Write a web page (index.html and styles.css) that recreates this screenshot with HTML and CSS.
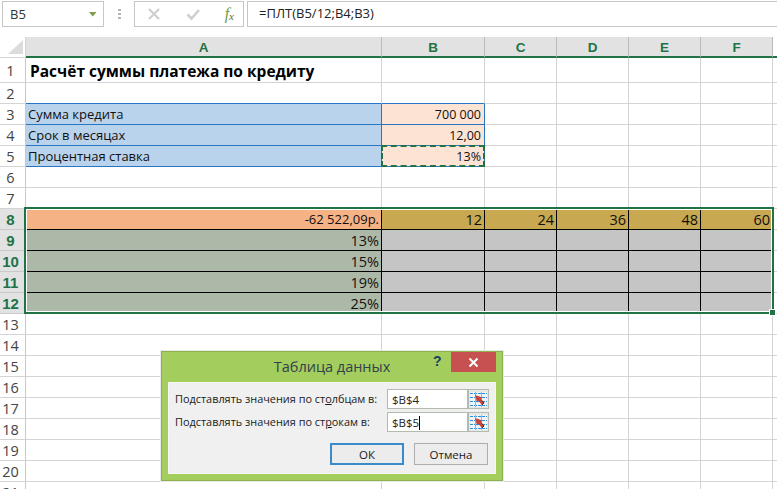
FILE: index.html
```html
<!DOCTYPE html>
<html lang="ru">
<head>
<meta charset="utf-8">
<title>Таблица данных</title>
<link rel="stylesheet" href="styles.css">
</head>
<body>
<div class="app">
  <div class="toolbar">
    <div class="namebox"><span>B5</span><svg class="caret" width="8" height="5" viewBox="0 0 8 5"><path d="M0 0h7.500L3.750 4.500z" fill="#7c9e48"/></svg></div>
    <div class="grip"><i></i><i></i><i></i></div>
    <div class="fxbox">
      <svg width="14" height="14" viewBox="0 0 14 14"><path d="M2 2l10 10M12 2L2 12" stroke="#cfcfcf" stroke-width="2.2" fill="none"/></svg>
      <svg width="14" height="14" viewBox="0 0 14 14"><path d="M1.500 7.500l4 4L13 3" stroke="#cfcfcf" stroke-width="2.6" fill="none"/></svg>
      <span class="fx">f<sub>x</sub></span>
    </div>
    <div class="formula">=ПЛТ(B5/12;B4;B3)</div>
  </div>

  <div class="sheet">
    <div class="row head">
      <div class="corner"><svg width="15" height="14" viewBox="0 0 15 14"><path d="M15 0v14H0z" fill="#dcdcdc"/></svg></div>
      <div class="colhead">A</div><div class="colhead">B</div><div class="colhead">C</div><div class="colhead">D</div><div class="colhead">E</div><div class="colhead">F</div><div class="colrest"></div>
    </div>
    <div class="row tall">
      <div class="rowhead">1</div><div class="cell title">Расчёт суммы платежа по кредиту</div><div class="cell"></div><div class="cell"></div><div class="cell"></div><div class="cell"></div><div class="cell"></div><div class="cell"></div>
    </div>
    <div class="row">
      <div class="rowhead">2</div><div class="cell blueb"></div><div class="cell blueb"></div><div class="cell"></div><div class="cell"></div><div class="cell"></div><div class="cell"></div><div class="cell"></div>
    </div>
    <div class="row">
      <div class="rowhead">3</div><div class="cell label">Сумма кредита</div><div class="cell input num">700 000</div><div class="cell"></div><div class="cell"></div><div class="cell"></div><div class="cell"></div><div class="cell"></div>
    </div>
    <div class="row">
      <div class="rowhead">4</div><div class="cell label">Срок в месяцах</div><div class="cell input num">12,00</div><div class="cell"></div><div class="cell"></div><div class="cell"></div><div class="cell"></div><div class="cell"></div>
    </div>
    <div class="row">
      <div class="rowhead">5</div><div class="cell label">Процентная ставка</div><div class="cell input num ants">13%</div><div class="cell"></div><div class="cell"></div><div class="cell"></div><div class="cell"></div><div class="cell"></div>
    </div>
    <div class="row">
      <div class="rowhead">6</div><div class="cell"></div><div class="cell"></div><div class="cell"></div><div class="cell"></div><div class="cell"></div><div class="cell"></div><div class="cell"></div>
    </div>
    <div class="row">
      <div class="rowhead">7</div><div class="cell"></div><div class="cell"></div><div class="cell"></div><div class="cell"></div><div class="cell"></div><div class="cell"></div><div class="cell"></div>
    </div>
    <div class="row">
      <div class="rowhead on">8</div><div class="cell corner-val num">-62 522,09р.</div><div class="cell term num">12</div><div class="cell term num">24</div><div class="cell term num">36</div><div class="cell term num">48</div><div class="cell term num">60</div><div class="cell"></div>
    </div>
    <div class="row">
      <div class="rowhead on">9</div><div class="cell rate num">13%</div><div class="cell res"></div><div class="cell res"></div><div class="cell res"></div><div class="cell res"></div><div class="cell res"></div><div class="cell"></div>
    </div>
    <div class="row">
      <div class="rowhead on">10</div><div class="cell rate num">15%</div><div class="cell res"></div><div class="cell res"></div><div class="cell res"></div><div class="cell res"></div><div class="cell res"></div><div class="cell"></div>
    </div>
    <div class="row">
      <div class="rowhead on">11</div><div class="cell rate num">19%</div><div class="cell res"></div><div class="cell res"></div><div class="cell res"></div><div class="cell res"></div><div class="cell res"></div><div class="cell"></div>
    </div>
    <div class="row">
      <div class="rowhead on">12</div><div class="cell rate num">25%</div><div class="cell res"></div><div class="cell res"></div><div class="cell res"></div><div class="cell res"></div><div class="cell res"></div><div class="cell"></div>
    </div>
    <div class="row"><div class="rowhead">13</div><div class="cell"></div><div class="cell"></div><div class="cell"></div><div class="cell"></div><div class="cell"></div><div class="cell"></div><div class="cell"></div></div>
    <div class="row"><div class="rowhead">14</div><div class="cell"></div><div class="cell"></div><div class="cell"></div><div class="cell"></div><div class="cell"></div><div class="cell"></div><div class="cell"></div></div>
    <div class="row"><div class="rowhead">15</div><div class="cell"></div><div class="cell"></div><div class="cell"></div><div class="cell"></div><div class="cell"></div><div class="cell"></div><div class="cell"></div></div>
    <div class="row"><div class="rowhead">16</div><div class="cell"></div><div class="cell"></div><div class="cell"></div><div class="cell"></div><div class="cell"></div><div class="cell"></div><div class="cell"></div></div>
    <div class="row"><div class="rowhead">17</div><div class="cell"></div><div class="cell"></div><div class="cell"></div><div class="cell"></div><div class="cell"></div><div class="cell"></div><div class="cell"></div></div>
    <div class="row"><div class="rowhead">18</div><div class="cell"></div><div class="cell"></div><div class="cell"></div><div class="cell"></div><div class="cell"></div><div class="cell"></div><div class="cell"></div></div>
    <div class="row"><div class="rowhead">19</div><div class="cell"></div><div class="cell"></div><div class="cell"></div><div class="cell"></div><div class="cell"></div><div class="cell"></div><div class="cell"></div></div>
    <div class="row"><div class="rowhead">20</div><div class="cell"></div><div class="cell"></div><div class="cell"></div><div class="cell"></div><div class="cell"></div><div class="cell"></div><div class="cell"></div></div>
    <div class="row"><div class="rowhead">21</div><div class="cell"></div><div class="cell"></div><div class="cell"></div><div class="cell"></div><div class="cell"></div><div class="cell"></div><div class="cell"></div></div>

    <div class="selection"><span class="handle"></span></div>
  </div>

  <div class="dialog">
    <div class="dlg-title">
      <span class="dlg-name">Таблица данных</span>
      <span class="dlg-help">?</span>
      <span class="dlg-close"><svg width="11" height="11" viewBox="0 0 11 11"><path d="M1.500 1.500l8 8M9.500 1.500l-8 8" stroke="#fff" stroke-width="2" fill="none"/></svg></span>
    </div>
    <div class="dlg-body">
      <div class="field">
        <span class="field-label">Подставлять значения по ст<u>о</u>лбцам в:</span>
        <div class="refbox"><span class="reftext">$B$4</span>
          <span class="refbtn"><svg width="17" height="15" viewBox="0 0 17 15"><rect width="17" height="15" fill="#eef5fa"/><path d="M0 1.500h17M0 5.500h17M0 9.500h17M0 13.500h17" stroke="#2f8fd6" stroke-width="1" stroke-dasharray="3 1"/><path d="M5.500 0v15M11.500 0v15" stroke="#8fc0a8" stroke-width="1"/><path d="M5 3l7.500 2.500-1.500 1.500 3.500 3.500-2.500 2.500L8.500 9 7 10.500z" fill="#c4473a"/><path d="M11.500 8.500l2.500 2.500-2 2" stroke="#6b2a22" stroke-width="1" fill="none"/></svg></span>
        </div>
      </div>
      <div class="field">
        <span class="field-label">Подставлять значения по ст<u>р</u>окам в:</span>
        <div class="refbox"><span class="reftext caretted">$B$5</span>
          <span class="refbtn"><svg width="17" height="15" viewBox="0 0 17 15"><rect width="17" height="15" fill="#eef5fa"/><path d="M0 1.500h17M0 5.500h17M0 9.500h17M0 13.500h17" stroke="#2f8fd6" stroke-width="1" stroke-dasharray="3 1"/><path d="M5.500 0v15M11.500 0v15" stroke="#8fc0a8" stroke-width="1"/><path d="M5 3l7.500 2.500-1.500 1.500 3.500 3.500-2.500 2.500L8.500 9 7 10.500z" fill="#c4473a"/><path d="M11.500 8.500l2.500 2.500-2 2" stroke="#6b2a22" stroke-width="1" fill="none"/></svg></span>
        </div>
      </div>
      <div class="buttons">
        <button class="btn primary">ОК</button>
        <button class="btn">Отмена</button>
      </div>
    </div>
  </div>
</div>
</body>
</html>
```

FILE: styles.css
```css
* { box-sizing: border-box; }
html, body { margin: 0; padding: 0; background: #fff; }
body { width: 777px; height: 489px; overflow: hidden; font-family: "Open Sans", "Noto Sans", sans-serif; color: #1a1a1a; }
.app { position: relative; width: 777px; height: 489px; overflow: hidden; }

.toolbar { height: 37px; display: flex; align-items: flex-start; padding-top: 1px; padding-left: 2px; }
.namebox { width: 102px; height: 26px; border: 1px solid #c6c6c6; display: flex; align-items: center; justify-content: space-between; padding: 0 6px 0 7px; font-size: 13px; color: #333; }
.grip { width: 30px; height: 26px; display: flex; flex-direction: column; align-items: center; justify-content: center; gap: 2px; }
.grip i { display: block; width: 3px; height: 2px; background: #b5b5b5; }
.fxbox { width: 110px; height: 26px; border: 1px solid #c6c6c6; display: flex; align-items: center; justify-content: space-between; padding: 0 9px 0 12px; }
.fx { font-family: "Liberation Serif", serif; font-style: italic; font-size: 16px; color: #6f9a3f; line-height: 1; }
.fx sub { font-size: 11px; vertical-align: -1px; color: #5f6f3a; line-height: 0; }
.formula { flex: 1; height: 26px; margin-left: 3px; border: 1px solid #c6c6c6; border-right: 0; padding-left: 11px; font-size: 13px; line-height: 23px; color: #222; }

.sheet { position: relative; }
.row { display: grid; grid-template-columns: 26px 356px 103px 72px 72px 72px 72px 4px; grid-template-rows: 100%; height: 21px; }
.row.tall { height: 25px; }
.corner { border-right: 1px solid #d4d4d4; border-bottom: 1px solid #d4d4d4; padding: 3px 0 0 8px; line-height: 0; }
.colhead, .colrest { background-color: #e2e2e2; background-image: radial-gradient(#d2d2d2 0.6px, transparent 0.7px); background-size: 6px 4px; border-right: 1px solid #bcbcbc; border-bottom: 2px solid #217346; color: #217346; font-weight: bold; font-size: 13.5px; line-height: 21px; text-align: center; font-family: "Liberation Sans", sans-serif; }
.colrest { background: #fff; border-right: 0; }
.rowhead { border-right: 1px solid #c8c8c8; border-bottom: 1px solid #d4d4d4; font-size: 14.5px; line-height: 22px; text-align: center; color: #444; padding-right: 4px; }
.tall .rowhead { line-height: 26px; }
.rowhead.on { background: #e2e2e2; color: #217346; font-weight: bold; border-bottom-color: #c9c9c9; font-family: "Liberation Sans", sans-serif; font-size: 15px; }

.cell { border-right: 1px solid #d4d4d4; border-bottom: 1px solid #d4d4d4; font-family: "Open Sans", sans-serif; font-size: 13px; line-height: 21px; white-space: nowrap; color: #111; padding: 0 2px 0 3px; position: relative; }
.num { text-align: right; }
.title { font-weight: bold; font-size: 15.5px; line-height: 26px; padding-left: 4px; color: #000; }
.blueb { border-bottom-color: #2a75c2; }
.label { background: #bad3ec; border-right-color: #2a75c2; border-bottom: 1px solid #2a75c2; padding-left: 2px; }
.input { background: #fde3d4; border-right-color: #2a75c2; border-bottom: 1px solid #2a75c2; font-size: 12.5px; padding-right: 3px; }
.ants::after { content: ""; position: absolute; left: -1px; right: -1px; top: -1px; bottom: -1px; border: 2px dashed #217346; }
.corner-val { background: #f5b285; border-right-color: #000; border-bottom-color: #000; }
.term { background: #c8a850; border-right-color: #000; border-bottom-color: #000; font-size: 14.5px; }
.rate { background: #adb9a8; border-right-color: #000; border-bottom-color: #000; font-size: 14.5px; }
.res { background-color: #c5c5c5; border-right-color: #000; border-bottom-color: #000; }

.selection { position: absolute; left: 24px; top: 170px; width: 750px; height: 107px; border: 2px solid #217346; box-shadow: inset 0 0 0 1px #fff; pointer-events: none; }
.handle { position: absolute; right: -4px; bottom: -4px; width: 7px; height: 7px; background: #217346; border: 1px solid #fff; }

.dialog { position: absolute; left: 161px; top: 351px; width: 342px; height: 130px; background: #a3cd5c; border: 1px solid #8eb14f; box-shadow: 0 0 0 1px #e9e9e9; padding: 0 6px 6px; display: flex; flex-direction: column; }
.dlg-title { height: 30px; flex: none; position: relative; }
.dlg-name { position: absolute; left: 0; right: 0; top: 5px; text-align: center; font-size: 14.5px; line-height: 20px; color: #31414f; font-family: "Open Sans", sans-serif; }
.dlg-help { position: absolute; left: 265px; top: -1px; font-weight: bold; font-size: 14px; line-height: 20px; color: #1f3f66; font-family: "Liberation Sans", sans-serif; }
.dlg-close { position: absolute; right: 0; top: 0; width: 45px; height: 20px; background: #c75050; display: flex; align-items: center; justify-content: center; }
.dlg-body { flex: 1; background-color: #f0f0f0; background-image: radial-gradient(#e6e6e6 0.6px, transparent 0.7px); background-size: 6px 4px; border: 1px solid #f6f6f6; padding: 6px 6px 0 6px; display: flex; flex-direction: column; gap: 3px; }
.field { display: flex; height: 20px; align-items: center; justify-content: space-between; }
.field-label { font-size: 10.9px; line-height: 20px; color: #1a1a1a; white-space: nowrap; }
.refbox { width: 102px; height: 20px; display: flex; border: 1px solid #b2bbad; background: #fff; }
.reftext { flex: 1; font-size: 11.5px; line-height: 19px; padding-left: 4px; color: #222; }
.caretted::after { content: ""; display: inline-block; width: 1px; height: 14px; background: #000; vertical-align: -3px; }
.refbtn { flex: none; width: 21px; background: #e6e8e4; border-left: 2px solid #b2bbad; display: flex; align-items: center; justify-content: center; }
.buttons { display: flex; justify-content: flex-end; gap: 10px; margin-top: 8px; margin-right: 1px; }
.btn { width: 74px; height: 22px; padding: 0; background: #ececec; border: 1px solid #adadad; font-family: "Open Sans", sans-serif; font-size: 11.5px; color: #1a1a1a; border-radius: 0; }
.btn.primary { border: 1px solid #3a8bc8; box-shadow: inset 0 0 0 1px #3a8bc8; }
```
